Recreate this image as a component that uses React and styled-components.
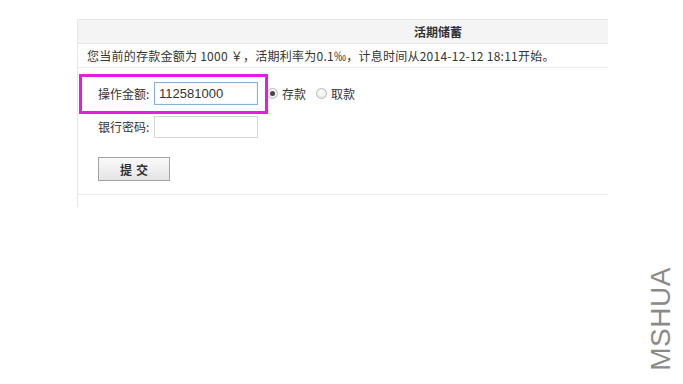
import React, { useState } from 'react'
import styled, { createGlobalStyle } from 'styled-components'

const GlobalStyle = createGlobalStyle`
  body {
    margin: 0;
    background: #fff;
    font-family: "Noto Sans CJK SC", "Liberation Sans", sans-serif;
    font-size: 12px;
    color: #333;
  }
`

const Page = styled.div`
  position: relative;
  width: 683px;
  height: 384px;
  overflow: hidden;
  padding: 19px 0 0 77px;
  box-sizing: border-box;
`

// the panel is wider than the visible frame and gets clipped on the right
const Frame = styled.div`
  width: 530px;
  overflow: hidden;
  border-left: 1px solid #e6e6e6;
`

const Panel = styled.div`
  width: 720px;
`

const Header = styled.div`
  height: 23px;
  line-height: 23px;
  background: #f4f4f4;
  border-top: 1px solid #e4e4e4;
  border-bottom: 1px solid #e4e4e4;
  text-align: center;
  font-weight: bold;
  color: #333;
`

const Info = styled.div`
  height: 23px;
  line-height: 23px;
  padding-left: 9px;
  letter-spacing: 0.25px;
  border-bottom: 1px solid #ececec;
`

const Form = styled.div`
  display: flex;
  flex-direction: column;
  gap: 10px;
  padding: 14px 0 13px 20px;
  border-bottom: 1px solid #ececec;
`

const Row = styled.div`
  display: flex;
  align-items: center;
  min-height: 23px;
`

const Label = styled.span`
  width: 56px;
  font-size: 12px;
`

const Input = styled.input`
  box-sizing: border-box;
  width: 104px;
  height: ${(p) => (p.$focus ? 23 : 22)}px;
  padding: 0 4px;
  border: 1px solid ${(p) => (p.$focus ? '#8aafd0' : '#d6d6d6')};
  box-shadow: ${(p) => (p.$focus ? 'inset 0 0 2px #cfe0f0' : 'none')};
  font-family: "Liberation Sans", sans-serif;
  font-size: 13px;
  color: #333;
  outline: none;
`

const Radios = styled.div`
  display: flex;
  align-items: center;
  margin-left: 9px;
  gap: 4px;
`

const RadioDot = styled.span`
  display: inline-block;
  width: 9px;
  height: 9px;
  border-radius: 50%;
  border: 1px solid #b9b9b9;
  background: radial-gradient(circle at 50% 40%, #fff 0%, #e2e2e2 100%);
  position: relative;
  margin-left: ${(p) => (p.$first ? 0 : 6)}px;

  &::after {
    content: '';
    display: ${(p) => (p.$checked ? 'block' : 'none')};
    position: absolute;
    left: 2px;
    top: 2px;
    width: 5px;
    height: 5px;
    border-radius: 50%;
    background: #444;
  }
`

const Button = styled.button`
  margin-top: 9px;
  width: 72px;
  height: 24px;
  border: 1px solid #a3a3a3;
  background: linear-gradient(#fafafa, #e4e4e4);
  font-family: "Noto Sans CJK SC", sans-serif;
  font-size: 12px;
  font-weight: bold;
  color: #333;
  letter-spacing: 4px;
  padding: 0 0 0 4px;
`

const Tail = styled.div`
  height: 12px;
`

const Highlight = styled.div`
  position: absolute;
  left: 79px;
  top: 74px;
  width: 183px;
  height: 34px;
  border: 3px solid #e61de0;
`

const Watermark = styled.div`
  position: absolute;
  left: 661px;
  top: 319px;
  transform: translate(-50%, -50%) rotate(-90deg);
  font-family: "Liberation Sans", sans-serif;
  font-size: 28px;
  color: #8a8a8a;
  white-space: nowrap;
  letter-spacing: 0.5px;
`

const App = () => {
  const [mode, setMode] = useState('deposit')
  const [amount, setAmount] = useState('112581000')

  return (
    <Page>
      <GlobalStyle />
      <Frame>
        <Panel>
          <Header>活期储蓄</Header>
          <Info>您当前的存款金额为 1000 ￥，活期利率为0.1‰，计息时间从2014-12-12 18:11开始。</Info>
          <Form>
            <Row>
              <Label>操作金额:</Label>
              <Input $focus value={amount} onChange={(e) => setAmount(e.target.value)} />
              <Radios>
                <RadioDot $first $checked={mode === 'deposit'} onClick={() => setMode('deposit')} />
                <span>存款</span>
                <RadioDot $checked={mode === 'withdraw'} onClick={() => setMode('withdraw')} />
                <span>取款</span>
              </Radios>
            </Row>
            <Row>
              <Label>银行密码:</Label>
              <Input type="password" />
            </Row>
            <Row>
              <Button>提交</Button>
            </Row>
          </Form>
          <Tail />
        </Panel>
      </Frame>
      <Highlight />
      <Watermark>MSHUA</Watermark>
    </Page>
  )
}

export default App
